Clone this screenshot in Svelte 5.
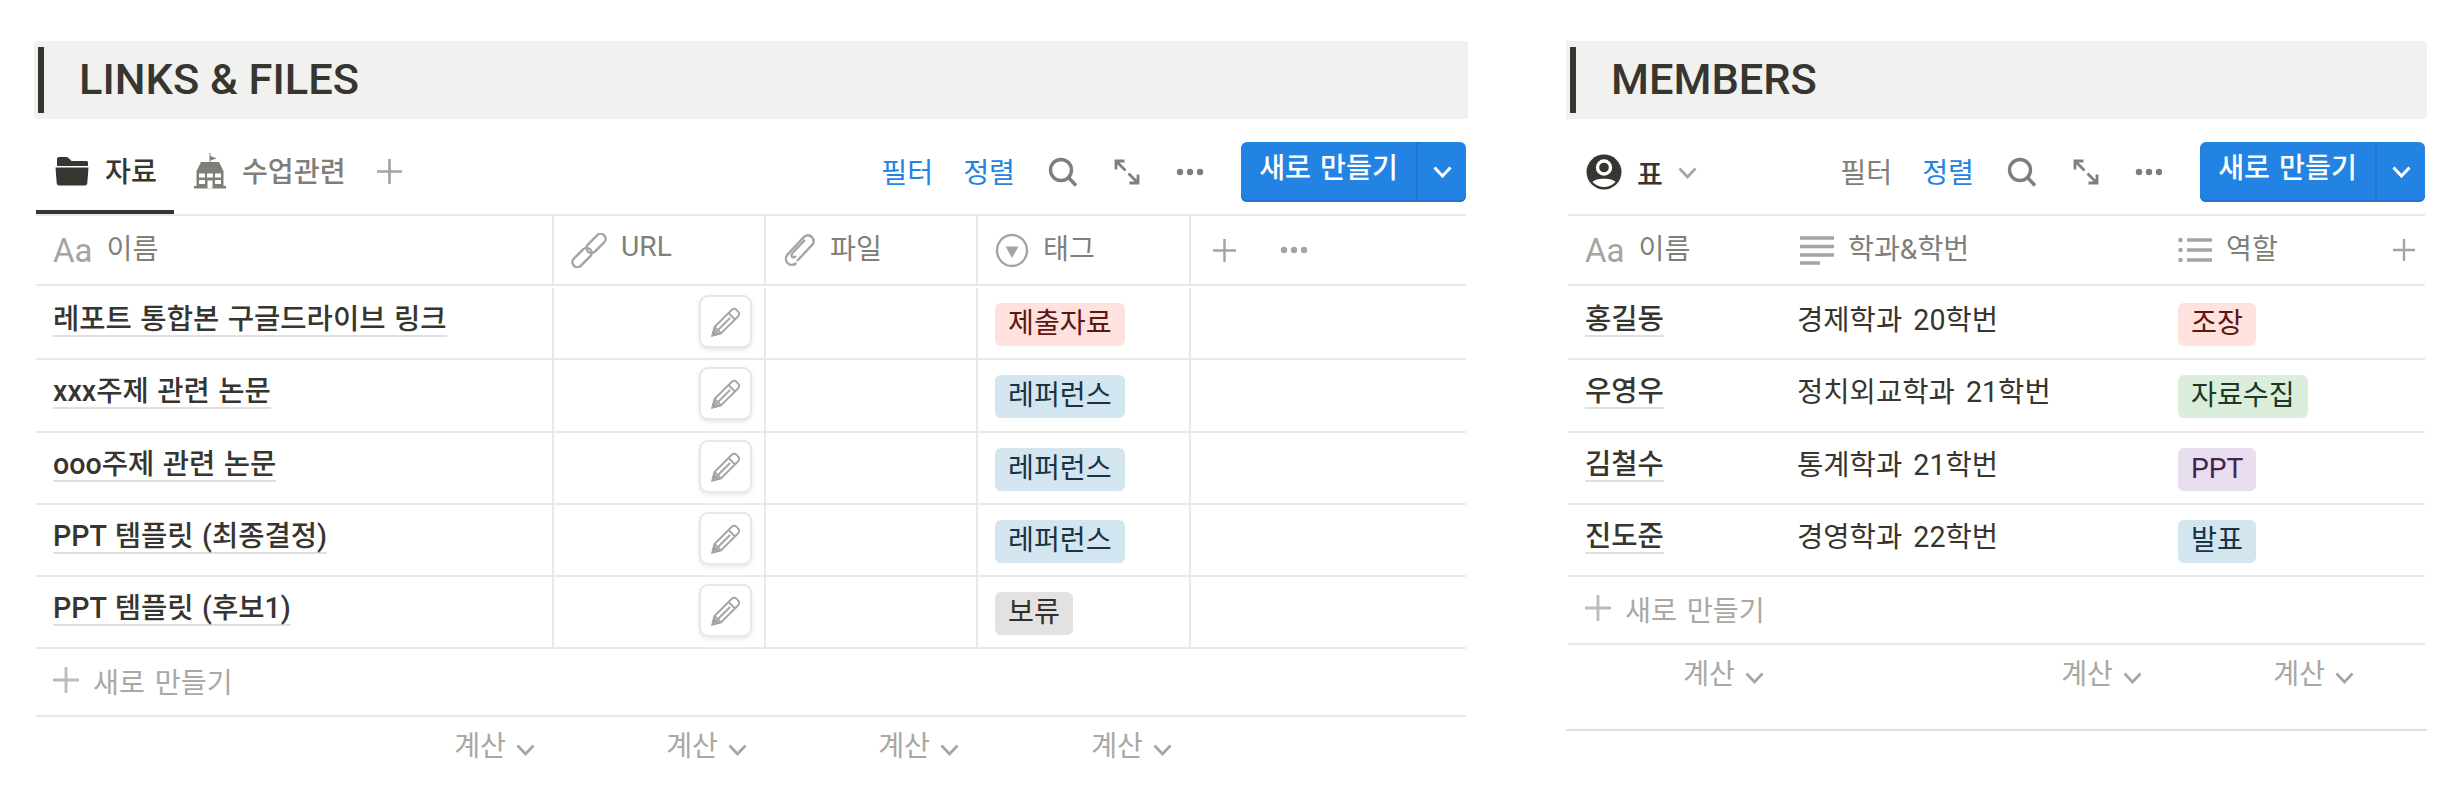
<script>
	const files = [
		{ name: '레포트 통합본 구글드라이브 링크', tag: '제출자료', color: 'red' },
		{ name: 'xxx주제 관련 논문', tag: '레퍼런스', color: 'blue' },
		{ name: 'ooo주제 관련 논문', tag: '레퍼런스', color: 'blue' },
		{ name: 'PPT 템플릿 (최종결정)', tag: '레퍼런스', color: 'blue' },
		{ name: 'PPT 템플릿 (후보1)', tag: '보류', color: 'gray' }
	];

	const members = [
		{ name: '홍길동', dept: '경제학과 20학번', tag: '조장', color: 'red' },
		{ name: '우영우', dept: '정치외교학과 21학번', tag: '자료수집', color: 'green' },
		{ name: '김철수', dept: '통계학과 21학번', tag: 'PPT', color: 'purple' },
		{ name: '진도준', dept: '경영학과 22학번', tag: '발표', color: 'blue' }
	];
</script>

{#snippet plus(size)}
	<svg class="plus" width={size} height={size} viewBox="0 0 24 24"><path d="M12 0v24M0 12h24" /></svg>
{/snippet}

{#snippet chevron(cls)}
	<svg class="chev {cls}" width="19" height="12" viewBox="0 0 19 12"><path d="M1.5 1.5 9.5 10l8-8.5" /></svg>
{/snippet}

{#snippet dots(cls)}
	<svg class="dots {cls}" width="28" height="8" viewBox="0 0 28 8">
		<circle cx="4" cy="4" r="3.2" /><circle cx="14" cy="4" r="3.2" /><circle cx="24" cy="4" r="3.2" />
	</svg>
{/snippet}

{#snippet tools(filterOn)}
	<div class="tools">
		<span class="tool first" class:on={filterOn}>필터</span>
		<span class="tool on">정렬</span>
		<svg class="search" width="30" height="30" viewBox="0 0 30 30">
			<circle cx="13" cy="13" r="10.5" /><path d="M20.5 20.5 28 28.5" />
		</svg>
		<svg class="expand" width="26" height="26" viewBox="0 0 26 26">
			<path d="M11.500 11.500 2 2M2 10.500V2h8.500M14.500 14.500 24 24M24 15.500v8.500h-8.500" />
		</svg>
		{@render dots('tool-dots')}
		<div class="new">
			<span class="new-label">새로 만들기</span>
			<span class="new-caret">{@render chevron('white')}</span>
		</div>
	</div>
{/snippet}

{#snippet pencil()}
	<span class="pencil">
		<svg width="30" height="30" viewBox="0 0 30 30">
			<path d="M1.5 28.5 3.5 20 20.5 3Q23 .8 25.2 2.6L27.4 4.8Q29.2 7 27 9.5L10 26.5Z" />
			<path d="M3.5 20 10 26.5M17.5 6 24 12.5M7.5 22.5 19 11" />
			<path class="tip" d="M1.5 28.5 3 22.5 7.5 27Z" />
		</svg>
	</span>
{/snippet}

{#snippet header(title)}
	<h2 class="title"><span class="title-text">{title}</span></h2>
{/snippet}

<main class="page">
	<section class="links">
		{@render header('LINKS & FILES')}

		<div class="toolbar">
			<div class="tabs">
				<div class="tab active">
					<svg width="34" height="30" viewBox="0 0 34 30">
						<path class="dark" d="M2 10V3Q2 1 4 1H11Q12.500 1 13.500 2L16.500 5H31.500Q33 5 33 6.500V10Z" />
						<path class="dark" d="M.5 11.500H33.500L32.300 27Q32 29.500 29.800 29.500H4.200Q2 29.500 1.700 27Z" />
					</svg>
					<span>자료</span>
				</div>
				<div class="tab">
					<svg width="32" height="36" viewBox="0 0 32 36">
						<path class="school" d="M15.500 0h1v3l6 2.500-6 2V9H25L29.500 18V33H32V35.500H0V33H2.500V18L7 9H15.500Z" />
						<path class="window" d="M5 20.500h6v4H5ZM21 20.500h6v4h-6ZM5 27h6v4H5ZM21 27h6v4h-6ZM13 20.500h6v4h-6ZM13.500 27.500h5V35.500h-5Z" />
					</svg>
					<span>수업관련</span>
				</div>
				<span class="tab-add">{@render plus(25)}</span>
			</div>
			{@render tools(true)}
		</div>

		<div class="row head files-grid">
			<div class="cell">
				<span class="aa">Aa</span><span>이름</span>
			</div>
			<div class="cell">
				<svg class="prop" width="36" height="35" viewBox="0 0 36 35">
					<rect x="-11.500" y="-5" width="23" height="10" rx="5" transform="translate(25 10.500) rotate(-45)" />
					<rect x="-11.500" y="-5" width="23" height="10" rx="5" transform="translate(11 24.500) rotate(-45)" />
				</svg>
				<span>URL</span>
			</div>
			<div class="cell">
				<svg class="prop" width="33" height="35" viewBox="0 0 33 35">
					<path d="M14 28 29.500 11.500C33 6.500 27 -.5 21.500 3.500L4.500 21.500C-.5 28 7 35.500 13.500 30" />
					<path d="M13 23C10 26 7 23 9.500 20L22 7" />
				</svg>
				<span>파일</span>
			</div>
			<div class="cell">
				<svg class="prop" width="34" height="35" viewBox="0 0 34 35">
					<ellipse cx="17" cy="17.500" rx="15" ry="15.500" />
					<path class="fill" d="M10.500 13.500H23.500L17 25Z" />
				</svg>
				<span>태그</span>
			</div>
			<div class="cell last">
				{@render plus(23)}
				{@render dots('small')}
			</div>
		</div>

		<div class="body">
			{#each files as file}
				<div class="row files-grid">
					<div class="cell"><span class="name">{file.name}</span></div>
					<div class="cell edit">{@render pencil()}</div>
					<div class="cell"></div>
					<div class="cell"><span class="tag {file.color}">{file.tag}</span></div>
					<div class="cell last"></div>
				</div>
			{/each}
		</div>

		<div class="add">{@render plus(26)}<span>새로 만들기</span></div>

		<div class="foot files-grid">
			{#each [0, 1, 2, 3] as i (i)}
				<div class="calc"><span>계산</span>{@render chevron('foot-chev')}</div>
			{/each}
		</div>
	</section>

	<section class="members">
		{@render header('MEMBERS')}

		<div class="toolbar">
			<div class="view">
				<svg width="36" height="36" viewBox="0 0 36 36">
					<circle class="dark" cx="18" cy="18" r="17.500" />
					<circle class="head-ring" cx="18" cy="13.500" r="6.500" />
					<path class="window" d="M6.500 28C9 23.500 27 23.500 29.500 28 26 31.500 22 33 18 33S10 31.500 6.500 28Z" />
				</svg>
				<span>표</span>
				{@render chevron('view-chev')}
			</div>
			{@render tools(false)}
		</div>

		<div class="row head members-grid">
			<div class="cell">
				<span class="aa">Aa</span><span>이름</span>
			</div>
			<div class="cell">
				<svg class="prop" width="34" height="30" viewBox="0 0 34 30">
					<path class="thick" d="M0 3h34M0 11.500h34M0 20h34M0 28h20" />
				</svg>
				<span>학과&학번</span>
			</div>
			<div class="cell">
				<svg class="prop" width="34" height="26" viewBox="0 0 34 26">
					<path class="thick" d="M9 3h25M9 13h25M9 23h25" />
					<circle class="fill" cx="2.500" cy="3" r="2.300" /><circle class="fill" cx="2.500" cy="13" r="2.300" /><circle class="fill" cx="2.500" cy="23" r="2.300" />
				</svg>
				<span>역할</span>
			</div>
			<div class="cell end">{@render plus(22)}</div>
		</div>

		<div class="body">
			{#each members as person}
				<div class="row members-grid">
					<div class="cell"><span class="name">{person.name}</span></div>
					<div class="cell"><span class="dept">{person.dept}</span></div>
					<div class="cell"><span class="tag {person.color}">{person.tag}</span></div>
					<div class="cell"></div>
				</div>
			{/each}
		</div>

		<div class="add">{@render plus(26)}<span>새로 만들기</span></div>

		<div class="foot members-grid boxed">
			{#each [0, 1, 2] as i (i)}
				<div class="calc"><span>계산</span>{@render chevron('foot-chev')}</div>
			{/each}
		</div>
	</section>
</main>

<style>
	:global(body) {
		margin: 0;
		background: #fff;
		font-family: Roboto, 'Noto Sans CJK KR', sans-serif;
		color: #37352f;
	}

	.page {
		display: flex;
		gap: 98px;
		padding: 41px 0 0 34px;
		font-size: 28.2px;
	}

	.links {
		width: 1434px;
	}

	.members {
		width: 861px;
	}

	.title {
		height: 78px;
		margin: 0;
		padding: 6px 0 6px 4px;
		box-sizing: border-box;
		background: #f1f1ef;
	}

	.title-text {
		display: block;
		height: 66px;
		padding-left: 35px;
		border-left: 6px solid #37352f;
		font-size: 43.4px;
		font-weight: 500;
		line-height: 66px;
	}

	.toolbar {
		display: flex;
		justify-content: space-between;
		align-items: center;
		height: 97px;
		margin: 0 2px;
		padding: 23px 0 12px;
		box-sizing: border-box;
		border-bottom: 2px solid #e9e9e7;
	}

	.tabs {
		display: flex;
		align-self: stretch;
		margin-bottom: -14px;
	}

	.tab {
		display: flex;
		align-items: center;
		gap: 16px;
		box-sizing: border-box;
		height: 72px;
		padding: 0 17px 14px 19px;
		color: #7f7e79;
		font-weight: 500;
	}

	.tab > span {
		margin-bottom: 3px;
	}

	.tab.active {
		padding-bottom: 10px;
		border-bottom: 4px solid #37352f;
		color: #37352f;
	}

	.tab + .tab {
		padding-left: 20px;
		padding-right: 0;
	}

	.tab-add {
		display: flex;
		align-items: center;
		height: 58px;
		margin-left: 31px;
	}

	.dark {
		fill: #37352f;
	}

	.school {
		fill: #7f7e79;
	}

	.window {
		fill: #fff;
	}

	.head-ring {
		fill: #37352f;
		stroke: #fff;
		stroke-width: 3.4;
	}

	.view {
		display: flex;
		align-items: center;
		gap: 15px;
		padding-left: 18px;
		font-weight: 500;
	}

	.tools {
		display: flex;
		align-items: center;
		gap: 33px;
	}

	.tool {
		margin-bottom: 3px;
		color: #7f7e79;
	}

	.tool.first {
		margin-right: -3px;
	}

	.tool.on {
		color: #2383e2;
	}

	.search {
		margin-right: 3px;
		fill: none;
		stroke: #7f7e79;
		stroke-width: 3.4;
	}

	.expand {
		margin-right: 3px;
		fill: none;
		stroke: #7f7e79;
		stroke-width: 2.8;
	}

	.dots {
		fill: #7f7e79;
	}

	.tool-dots {
		margin-right: 4px;
	}

	.dots.small {
		fill: #a5a4a0;
	}

	.new {
		display: flex;
		box-sizing: border-box;
		width: 225px;
		height: 60px;
		border-radius: 6px;
		background: #2383e2;
		box-shadow: inset 0 -2px 0 #1f76cc;
		color: #fff;
		font-weight: 500;
	}

	.new-label {
		width: 175px;
		text-align: center;
		line-height: 54px;
		word-spacing: 2px;
		white-space: nowrap;
	}

	.new-caret {
		display: flex;
		flex: 1;
		align-items: center;
		justify-content: center;
		border-left: 2px solid #1f76cc;
	}

	.chev {
		flex: none;
		fill: none;
		stroke: #a5a4a0;
		stroke-width: 2.6;
	}

	.chev.white {
		stroke: #fff;
		stroke-width: 3;
	}

	.view-chev {
		margin-top: 2px;
	}

	.plus {
		flex: none;
		fill: none;
		stroke: #a5a4a0;
		stroke-width: 2.6;
	}

	.row {
		display: grid;
		margin: 0 2px;
		border-bottom: 2px solid #e9e9e7;
	}

	.files-grid {
		grid-template-columns: 518px 212px 212px 213px 1fr;
	}

	.members-grid {
		grid-template-columns: 215px 378px 212px 1fr;
	}

	.head {
		height: 70px;
		box-sizing: border-box;
		color: #807f7a;
	}

	.cell {
		display: flex;
		align-items: center;
		box-sizing: border-box;
		min-width: 0;
		padding-left: 17px;
	}

	.files-grid .cell:not(.last) {
		border-right: 2px solid #e9e9e7;
	}

	.head .cell {
		gap: 14px;
	}

	.head .cell > span:last-child {
		margin-bottom: 7px;
	}

	.head .last {
		gap: 44px;
		padding-left: 22px;
	}

	.head .end {
		justify-content: flex-end;
		padding-right: 10px;
	}

	.aa {
		color: #a5a4a0;
		font-size: 33px;
		line-height: 1;
	}

	.prop {
		flex: none;
		fill: none;
		stroke: #a5a4a0;
		stroke-width: 2.4;
	}

	.prop .fill {
		fill: #a5a4a0;
		stroke: none;
	}

	.prop .thick {
		stroke-width: 3.4;
	}

	.body {
		padding-top: 2px;
	}

	.body .row {
		height: 72px;
		box-sizing: border-box;
	}

	.body .row:nth-child(2) {
		height: 73px;
	}

	.body .cell {
		align-items: flex-start;
		padding-top: 15px;
	}

	.name {
		display: block;
		margin-top: -3px;
		padding-top: 3px;
		border-bottom: 2px solid #e0e0de;
		font-size: 28.6px;
		font-weight: 500;
		line-height: 32px;
		word-spacing: 1.3px;
		white-space: nowrap;
	}

	.dept {
		margin: 0 0 0 -3px;
		font-size: 28.6px;
		line-height: 35px;
		word-spacing: 4px;
		white-space: nowrap;
	}

	.body .edit {
		justify-content: flex-end;
		padding: 7px 12px 0 0;
	}

	.pencil {
		display: flex;
		align-items: center;
		justify-content: center;
		box-sizing: border-box;
		width: 53px;
		height: 53px;
		border: 2px solid #e7e7e5;
		border-radius: 9px;
		background: #fff;
		box-shadow: 0 2px 4px rgba(15, 15, 15, 0.1);
	}

	.pencil svg {
		fill: none;
		stroke: #a5a4a0;
		stroke-width: 1.9;
	}

	.pencil .tip {
		fill: #a5a4a0;
	}

	.tag {
		display: block;
		height: 43px;
		padding: 0 13px;
		border-radius: 6px;
		line-height: 41px;
		white-space: nowrap;
	}

	.red {
		background: #ffe2dd;
		color: #5d1715;
	}

	.blue {
		background: #d3e5ef;
		color: #183347;
	}

	.gray {
		background: #e3e2e0;
		color: #32302c;
	}

	.green {
		background: #dbeddb;
		color: #1c3829;
	}

	.purple {
		background: #e8deee;
		color: #412454;
	}

	.add {
		display: flex;
		align-items: center;
		gap: 14px;
		height: 68px;
		margin: 0 2px;
		padding: 0 0 4px 17px;
		box-sizing: border-box;
		border-bottom: 2px solid #e9e9e7;
		color: #a9a8a4;
		word-spacing: 3px;
	}

	.add .plus {
		stroke: #bcbcb8;
	}

	.foot {
		display: grid;
		height: 86px;
		margin: 0 2px;
		box-sizing: border-box;
	}

	.foot.boxed {
		margin: 0;
		padding: 0 2px;
		border-bottom: 2px solid #dedede;
	}

	.calc {
		display: flex;
		justify-content: flex-end;
		align-items: center;
		gap: 10px;
		height: 52px;
		padding-right: 19px;
		color: #a9a8a4;
	}

	.foot-chev {
		margin-top: 14px;
	}
</style>
